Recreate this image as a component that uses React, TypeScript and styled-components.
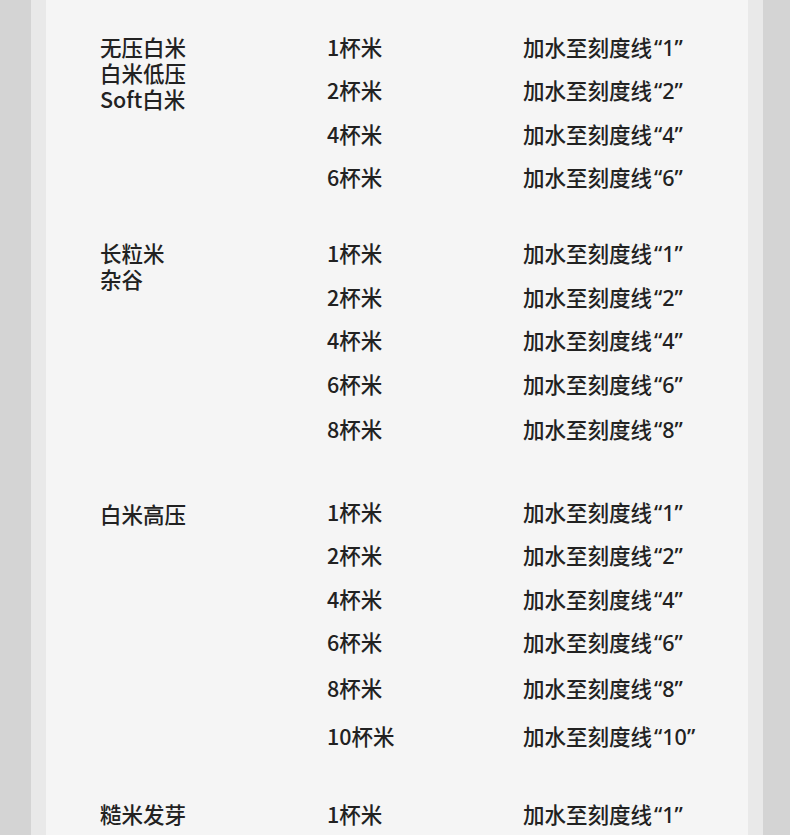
import styled, { createGlobalStyle } from "styled-components";

const GlobalStyle = createGlobalStyle`
  html, body {
    margin: 0;
    padding: 0;
    background: #d4d4d4;
  }
`;

const Frame = styled.div`
  margin: 0 27px 0 31px;
  padding: 0 15px;
  min-height: 100vh;
  background: #e9e9e9;
`;

const Sheet = styled.main`
  box-sizing: border-box;
  min-height: 100vh;
  padding: 34px 0 0 54px;
  background: #f5f5f5;
  font-family: "Noto Sans CJK SC", "Noto Sans", sans-serif;
  font-size: 21.5px;
  font-weight: 500;
  line-height: 26px;
  color: #222;
`;

const Group = styled.section<{ $gap: number }>`
  display: flex;
  margin-bottom: ${(p) => p.$gap}px;
`;

const Name = styled.div<{ $shift: number }>`
  width: 227px;
  padding-top: ${(p) => p.$shift}px;
  white-space: pre-line;
`;

const Rows = styled.div`
  display: flex;
  flex-direction: column;
`;

const Row = styled.div<{ $space: number }>`
  display: grid;
  grid-template-columns: 196px auto;
  height: 26px;
  margin-top: ${(p) => p.$space}px;
`;

const Quote = styled.span`
  font-family: "Noto Sans", sans-serif;
  margin-left: 2px;
`;

type Mode = {
  name: string;
  shift: number;
  gap: number;
  cups: number[];
  spaces: number[];
};

const modes: Mode[] = [
  { name: "无压白米\n白米低压\nSoft白米", shift: 0, gap: 50, cups: [1, 2, 4, 6], spaces: [0, 17, 18, 17] },
  { name: "长粒米\n杂谷", shift: 0, gap: 57, cups: [1, 2, 4, 6, 8], spaces: [0, 18, 17, 18, 19] },
  { name: "白米高压", shift: 2, gap: 52, cups: [1, 2, 4, 6, 8, 10], spaces: [0, 17, 18, 17, 20, 22] },
  { name: "糙米发芽", shift: 0, gap: 0, cups: [1], spaces: [0] },
];

export default function App() {
  return (
    <>
      <GlobalStyle />
      <Frame>
        <Sheet>
          {modes.map((m) => (
            <Group key={m.name} $gap={m.gap}>
              <Name $shift={m.shift}>{m.name}</Name>
              <Rows>
                {m.cups.map((c, i) => (
                  <Row key={c} $space={m.spaces[i]}>
                    <span>{c}杯米</span>
                    <span>
                      加水至刻度线<Quote>“{c}”</Quote>
                    </span>
                  </Row>
                ))}
              </Rows>
            </Group>
          ))}
        </Sheet>
      </Frame>
    </>
  );
}
